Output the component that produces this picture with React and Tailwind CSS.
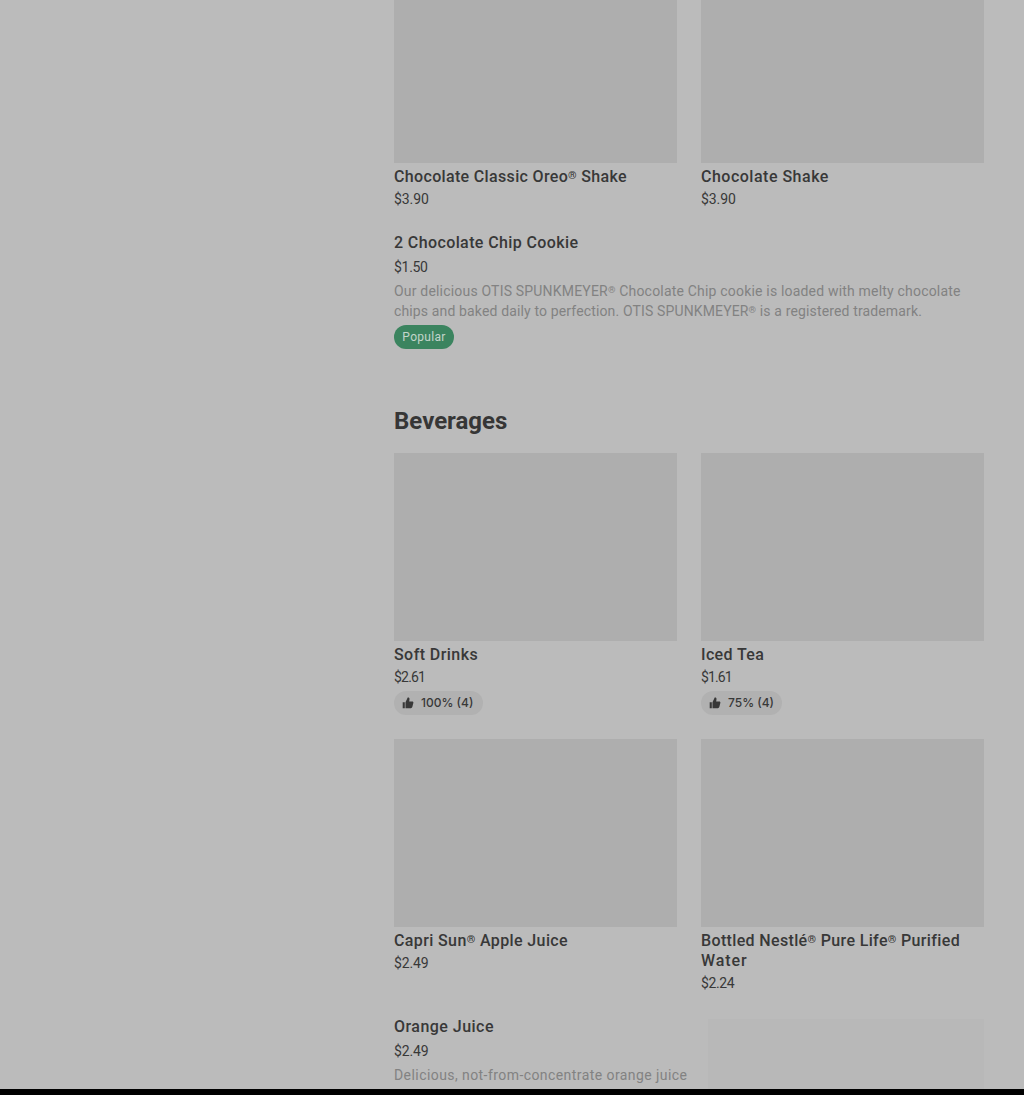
const FONT = "font-['Roboto','Liberation_Sans',sans-serif]";

const shakes = [
  { name: ["Chocolate Classic Oreo® Shake"], price: "$3.90", nameClass: "tracking-[0.34px]", priceClass: "tracking-[-0.1px]" },
  { name: ["Chocolate Shake"], price: "$3.90", nameClass: "tracking-[0.5px]", priceClass: "tracking-[-0.1px]" },
];

const drinks = [
  {
    name: ["Soft Drinks"],
    price: "$2.61",
    rating: "100% (4)",
    nameClass: "tracking-[0.43px]",
    priceClass: "tracking-[-0.8px]",
    pillClass: "w-[89px]",
  },
  {
    name: ["Iced Tea"],
    price: "$1.61",
    rating: "75% (4)",
    nameClass: "tracking-[0.36px]",
    priceClass: "tracking-[-0.9px]",
    pillClass: "w-[81px]",
  },
];

const juices = [
  { name: ["Capri Sun® Apple Juice"], price: "$2.49", nameClass: "tracking-[0.38px]", priceClass: "tracking-[-0.15px]" },
  {
    name: ["Bottled Nestlé® Pure Life® Purified", "Water"],
    price: "$2.24",
    nameClass: "tracking-[0.35px]",
    priceClass: "tracking-[-0.4px]",
  },
];

// The registered mark is set smaller and raised
const Text = ({ children }) =>
  children.split(/(®)/).map((part, i) =>
    part === "®" ? (
      <span key={i} className="relative top-[-0.3em] text-[0.68em] leading-none">
        ®
      </span>
    ) : (
      part
    )
  );

const ThumbIcon = () => (
  <svg viewBox="0 0 12 12" className="w-3 h-3 shrink-0" fill="#383838">
    <path d="M0.7 5.2h2.1v6H0.7zM3.5 5.3 5.7 0.6h.5c.9 0 1.4.7 1.3 1.5L7.2 4.4h3.1c.8 0 1.3.7 1.1 1.4l-1.1 4.3c-.2.7-.7 1.1-1.4 1.1H3.5z" />
  </svg>
);

const Card = ({ item, imageClass = "h-[188px]" }) => (
  <div className="min-w-0">
    <div className={`bg-[#aeaeae] ${imageClass}`} />
    <h3 className={`mt-1 text-base leading-5 font-medium text-[#383838] ${item.nameClass}`}>
      {item.name.map((line, i) => (
        <span key={line} className={i > 0 ? "block tracking-[0.9px]" : "block whitespace-nowrap"}>
          <Text>{line}</Text>
        </span>
      ))}
    </h3>
    <p className={`mt-0.5 text-sm leading-5 text-[#383838] ${item.priceClass}`}>{item.price}</p>
    {item.rating && (
      <div
        className={`mt-1 flex h-6 items-center gap-[7px] rounded-full bg-[#b1b1b1] pl-2 font-['Inter','Roboto',sans-serif] text-xs font-medium whitespace-nowrap text-[#383838] ${item.pillClass}`}
      >
        <ThumbIcon />
        <span>{item.rating}</span>
      </div>
    )}
  </div>
);

const App = () => {
  return (
    <div className={`flex h-[1095px] flex-col overflow-hidden bg-[#bbbbbb] ${FONT}`}>
      <main className="ml-[394px] h-[1089px] w-[590px] shrink-0 overflow-hidden">
        {/* Shakes */}
        <div className="grid h-[232px] grid-cols-2 gap-6">
          {shakes.map((item) => (
            <Card key={item.name[0]} item={item} imageClass="h-[163px]" />
          ))}
        </div>

        {/* Cookie */}
        <div className="h-[175px] pt-px">
          <h3 className="text-base leading-5 font-medium tracking-[0.39px] text-[#383838]">
            2 Chocolate Chip Cookie
          </h3>
          <p className="mt-1 text-sm leading-5 tracking-[-0.3px] text-[#383838]">$1.50</p>
          <p className="mt-1 text-sm leading-5 text-[#828282]">
            <span className="block tracking-[0.19px] whitespace-nowrap">
              <Text>Our delicious OTIS SPUNKMEYER® Chocolate Chip cookie is loaded with melty chocolate</Text>
            </span>
            <span className="block tracking-[0.14px] whitespace-nowrap">
              <Text>chips and baked daily to perfection. OTIS SPUNKMEYER® is a registered trademark.</Text>
            </span>
          </p>
          <span className="mt-1 flex h-6 w-[60px] items-center justify-center rounded-full bg-[#3b845f] text-xs tracking-[0.3px] text-[#c3d5cb]">
            Popular
          </span>
        </div>

        {/* Beverages */}
        <h2 className="h-[46px] text-2xl leading-7 font-bold text-[#363636]">Beverages</h2>
        <div className="grid h-[286px] grid-cols-2 gap-6">
          {drinks.map((item) => (
            <Card key={item.name[0]} item={item} />
          ))}
        </div>
        <div className="grid h-[277px] grid-cols-2 gap-6">
          {juices.map((item) => (
            <Card key={item.name[0]} item={item} />
          ))}
        </div>

        {/* Orange juice */}
        <div className="flex justify-between">
          <div className="w-[314px] shrink-0 pt-px">
            <h3 className="text-base leading-5 font-medium tracking-[0.47px] text-[#383838]">
              Orange Juice
            </h3>
            <p className="mt-1 text-sm leading-5 tracking-[-0.15px] text-[#383838]">$2.49</p>
            <p className="mt-1 text-sm leading-5 tracking-[0.43px] whitespace-nowrap text-[#828282]">
              Delicious, not-from-concentrate orange juice
            </p>
          </div>
          <div className="mt-[3px] h-[120px] w-[276px] bg-[#b8b8b8]" />
        </div>
      </main>
      <div className="h-[6px] shrink-0 bg-black" />
    </div>
  );
};

export default App;
